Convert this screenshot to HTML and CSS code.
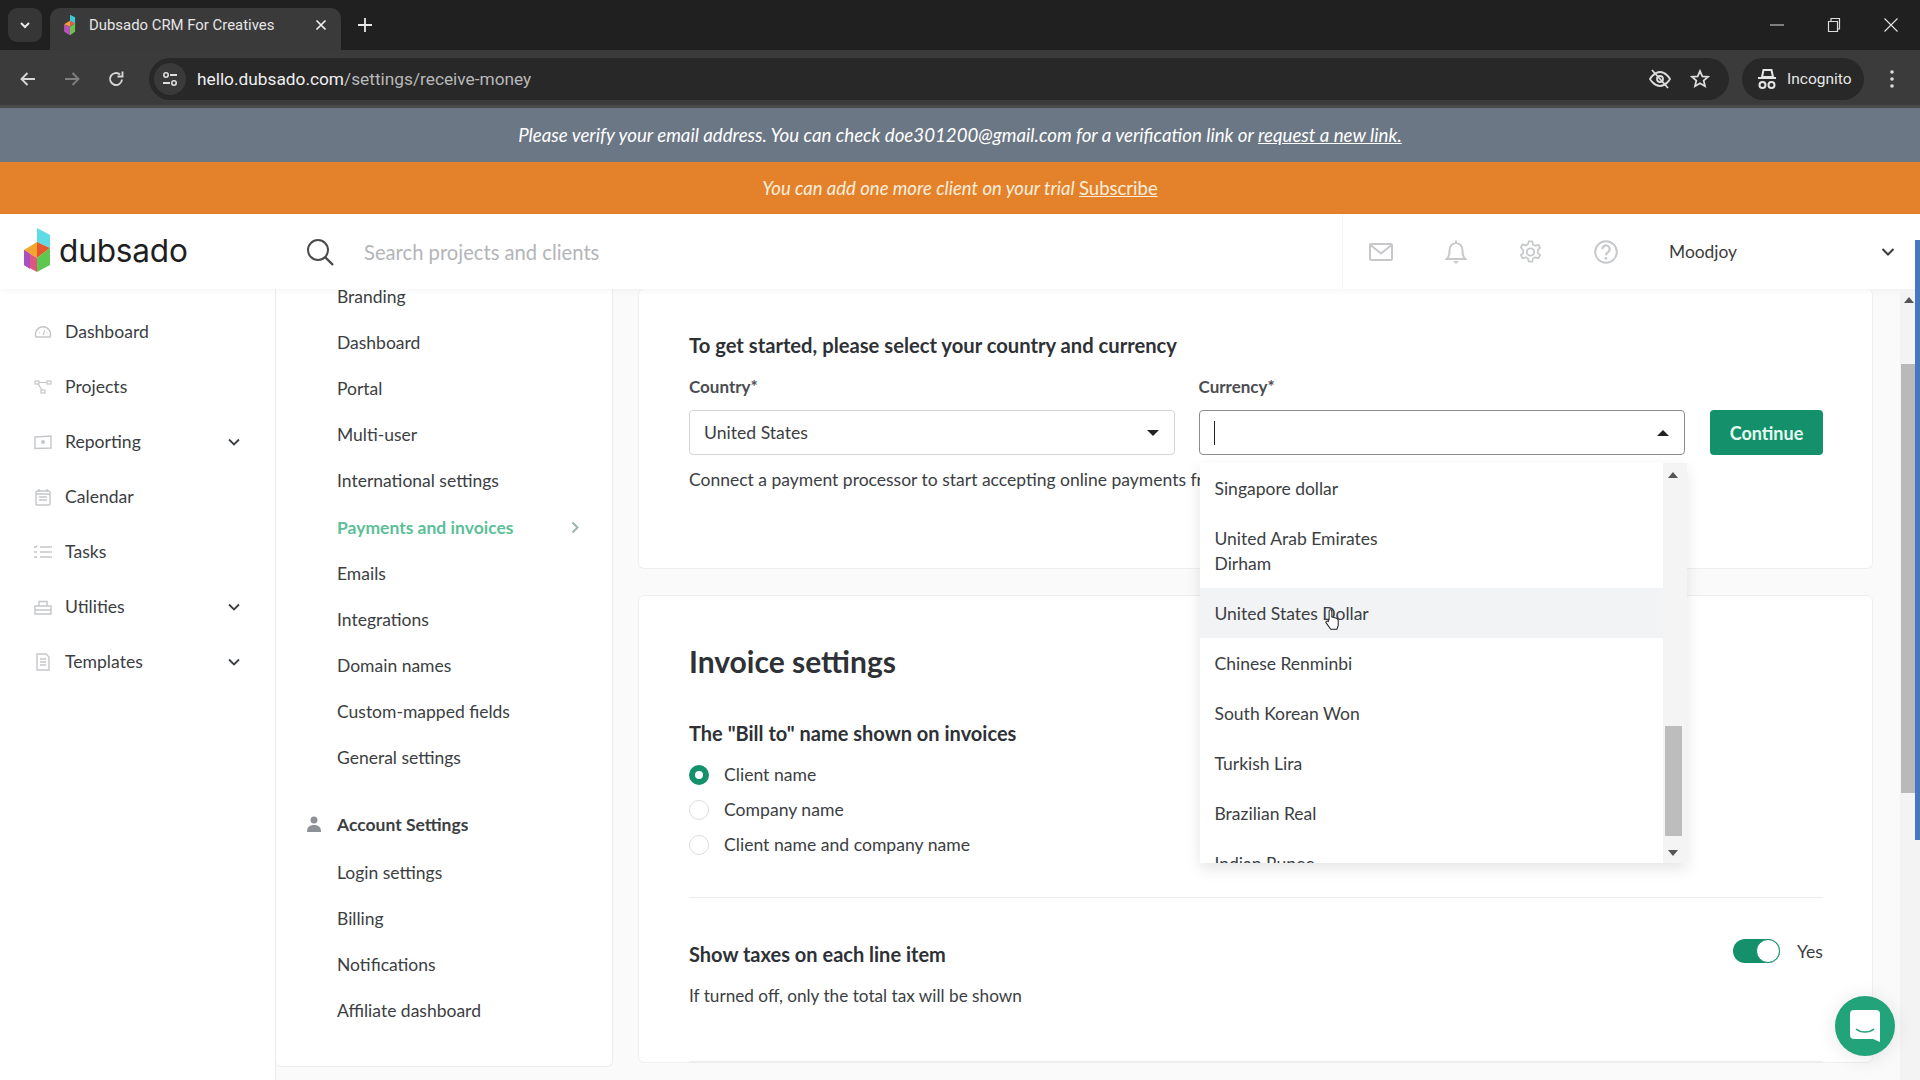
FILE: index.html
```html
<!DOCTYPE html>
<html lang="en">
<head>
<meta charset="utf-8">
<title>Dubsado CRM For Creatives</title>
<link rel="stylesheet" href="styles.css">
</head>
<body>
<div class="tabstrip">
  <div class="tabsearch"><svg width="14" height="14" viewBox="0 0 14 14"><path d="M3 5l4 4 4-4" fill="none" stroke="#e8e8e8" stroke-width="2"/></svg></div>
  <div class="tab">
    <svg class="favicon" width="14" height="24" viewBox="0 0 14 24"><path d="M7 0l6 3v8l-6-2z" fill="#3fc6d6"/><path d="M0 11l7-4v7z" fill="#f0a030"/><path d="M7 7l6 3-6 4z" fill="#e2574c"/><path d="M0 11l7 3v10l-7-4z" fill="#b552b8"/><path d="M7 14l6-4v10l-6 4z" fill="#6cc24a"/></svg>
    <span class="tabtitle">Dubsado CRM For Creatives</span>
    <svg class="tabx" width="12" height="12" viewBox="0 0 12 12"><path d="M1.500 1.500l9 9M10.500 1.500l-9 9" stroke="#efefef" stroke-width="1.700"/></svg>
  </div>
  <svg class="newtab" width="14" height="14" viewBox="0 0 14 14"><path d="M7 0v14M0 7h14" stroke="#e8e8e8" stroke-width="1.800"/></svg>
  <div class="winctl">
    <svg width="14" height="14" viewBox="0 0 14 14"><path d="M0 7h14" stroke="#dcdcdc" stroke-width="1"/></svg>
    <svg width="14" height="16" viewBox="0 0 14 16"><path d="M1.500 4.500h9v10h-9zM4 4V1.500h8.500V12H11" fill="none" stroke="#dcdcdc" stroke-width="1.200"/></svg>
    <svg width="14" height="14" viewBox="0 0 14 14"><path d="M0.500 0.500l13 13M13.500 0.500l-13 13" stroke="#e4e4e4" stroke-width="1.100"/></svg>
  </div>
</div>
<div class="toolbar">
  <svg class="navicon first" width="18" height="18" viewBox="0 0 18 18"><path d="M16 9H3M8.500 3L2.500 9l6 6" fill="none" stroke="#d6d6d6" stroke-width="1.900"/></svg>
  <svg class="navicon" width="18" height="18" viewBox="0 0 18 18"><path d="M2 9h13M9.500 3l6 6-6 6" fill="none" stroke="#7f7f7f" stroke-width="1.900"/></svg>
  <svg class="navicon" width="18" height="18" viewBox="0 0 18 18"><path d="M15 9.500A6 6 0 1 1 13 4.500M15.500 1.500v5h-5" fill="none" stroke="#d6d6d6" stroke-width="1.900"/></svg>
  <div class="urlbar">
    <span class="sitechip"><svg width="16" height="16" viewBox="0 0 16 16"><circle cx="4" cy="4" r="2.200" fill="none" stroke="#dedede" stroke-width="1.600"/><path d="M8 4h7M1 12h7" stroke="#dedede" stroke-width="1.800"/><circle cx="12" cy="12" r="2.200" fill="none" stroke="#dedede" stroke-width="1.600"/></svg></span>
    <span class="url"><b>hello.dubsado.com</b>/settings/receive-money</span>
    <svg class="eye" width="24" height="22" viewBox="0 0 24 22"><path d="M2 11s4-7 10-7 10 7 10 7-4 7-10 7S2 11 2 11z" fill="none" stroke="#dcdcdc" stroke-width="1.800"/><circle cx="12" cy="11" r="3" fill="none" stroke="#dcdcdc" stroke-width="1.800"/><path d="M4 2l16 18" stroke="#dcdcdc" stroke-width="1.800"/></svg>
    <svg width="20" height="20" viewBox="0 0 20 20"><path d="M10 2l2.300 5.300 5.700.5-4.300 3.800 1.300 5.600-5-3-5 3 1.300-5.600L2 7.800l5.700-.5z" fill="none" stroke="#dcdcdc" stroke-width="1.800"/></svg>
  </div>
  <div class="incognito">
    <svg width="20" height="22" viewBox="0 0 20 22"><path d="M5 9l1.500-7h8L16 9zM1 10h18" fill="none" stroke="#e6e6e6" stroke-width="2"/><circle cx="5.500" cy="17" r="3" fill="none" stroke="#e6e6e6" stroke-width="2"/><circle cx="14.500" cy="17" r="3" fill="none" stroke="#e6e6e6" stroke-width="2"/></svg>
    <span>Incognito</span>
  </div>
  <svg class="kebab" width="4" height="18" viewBox="0 0 4 18"><circle cx="2" cy="2" r="1.800" fill="#dcdcdc"/><circle cx="2" cy="9" r="1.800" fill="#dcdcdc"/><circle cx="2" cy="16" r="1.800" fill="#dcdcdc"/></svg>
</div>
<div class="verify">Please verify your email address. You can check doe301200@gmail.com for a verification link or&nbsp;<a>request a new link.</a></div>
<div class="trial">You can add one more client on your trial&nbsp;<a>Subscribe</a></div>
<header class="topbar">
  <div class="brand">
    <svg class="logomark" width="26" height="44" viewBox="0 0 26 44"><path d="M13 0l13 7v13l-13-6z" fill="#5fdbe6"/><path d="M0 22l13-8v16z" fill="#f3a52e"/><path d="M13 14l13 6-13 10z" fill="#e5572f"/><path d="M0 22l13 8v14L0 37z" fill="#e0567f"/><path d="M0 22l6 4v15l-6-4z" fill="#a84fc4"/><path d="M13 30l13-10v17l-13 7z" fill="#5ec84e"/></svg>
    <span class="wordmark">dubsado</span>
  </div>
  <div class="search">
    <svg width="30" height="30" viewBox="0 0 30 30"><circle cx="13" cy="13" r="10" fill="none" stroke="#4a4a4a" stroke-width="2"/><path d="M20 20l8 8" stroke="#4a4a4a" stroke-width="2.400"/></svg>
    <span>Search projects and clients</span>
  </div>
  <div class="topicons">
    <svg width="24" height="18" viewBox="0 0 24 18"><rect x="1" y="1" width="22" height="16" rx="1" fill="none" stroke="#c6c8ca" stroke-width="2"/><path d="M1.500 2L12 10.500 22.500 2" fill="none" stroke="#c6c8ca" stroke-width="2"/></svg>
    <svg width="22" height="24" viewBox="0 0 22 24"><path d="M11 0.500v2.500M1.500 19c2.500-1.500 3-4 3-8.500a6.500 7.500 0 0 1 13 0c0 4.500.5 7 3 8.500z" fill="none" stroke="#c6c8ca" stroke-width="2"/><path d="M8 21h6l-3 3z" fill="#c6c8ca"/></svg>
    <svg width="23" height="24" viewBox="0 0 24 26"><path d="M10 1.500h4l.7 3.500 2.500 1.300 3.300-1.200 2 3.500-2.600 2.300v3.200l2.600 2.300-2 3.500-3.300-1.200-2.500 1.300-.7 3.500h-4l-.7-3.500-2.500-1.300-3.300 1.200-2-3.500 2.600-2.300v-3.200L1.500 8.100l2-3.500 3.300 1.200 2.500-1.300z" fill="none" stroke="#c6c8ca" stroke-width="1.900" stroke-linejoin="round"/><circle cx="12" cy="13" r="4" fill="none" stroke="#c6c8ca" stroke-width="2"/></svg>
    <svg width="24" height="24" viewBox="0 0 26 26"><circle cx="13" cy="13" r="11.700" fill="none" stroke="#c6c8ca" stroke-width="2.200"/><path d="M9 10a4 4 0 1 1 6.300 3.200c-1.500 1-2.300 1.600-2.300 3.300" fill="none" stroke="#c6c8ca" stroke-width="2.400"/><circle cx="13" cy="20" r="1.500" fill="#c6c8ca"/></svg>
  </div>
  <div class="account"><span>Moodjoy</span><svg width="14" height="10" viewBox="0 0 14 10"><path d="M1.500 2l5.500 5.500L12.500 2" fill="none" stroke="#3c3c3c" stroke-width="2"/></svg></div>
</header>
<main class="workspace">
  <nav class="sidebar">
    <a class="navitem"><svg viewBox="0 0 18 18"><path d="M2 14a7.500 7.500 0 1 1 14 0z" fill="none" stroke="#c4c6c9" stroke-width="1.500"/><path d="M9 12l2-5M5 10h1M12.500 10h1" stroke="#c4c6c9" stroke-width="1.200"/></svg><span>Dashboard</span></a>
    <a class="navitem"><svg viewBox="0 0 18 18"><rect x="1" y="3" width="4" height="3" fill="none" stroke="#c4c6c9" stroke-width="1.200"/><rect x="13" y="3" width="4" height="3" fill="none" stroke="#c4c6c9" stroke-width="1.200"/><rect x="7" y="12" width="4" height="3" fill="none" stroke="#c4c6c9" stroke-width="1.200"/><path d="M5 4.500h8M4 6l4 6" stroke="#c4c6c9" stroke-width="1.200"/></svg><span>Projects</span></a>
    <a class="navitem"><svg viewBox="0 0 18 18"><path d="M1 4l16-1v12l-16 .5z" fill="none" stroke="#c4c6c9" stroke-width="1.400"/><circle cx="9" cy="9" r="2" fill="#c4c6c9"/></svg><span>Reporting</span><svg class="chev" viewBox="0 0 12 8"><path d="M1 1.500l5 5 5-5" fill="none" stroke="#3d4043" stroke-width="1.800"/></svg></a>
    <a class="navitem"><svg viewBox="0 0 18 18"><rect x="2" y="3" width="14" height="14" rx="1" fill="none" stroke="#c4c6c9" stroke-width="1.400"/><path d="M5 1v3M13 1v3M2 6h14M5 9h8M5 12h8" stroke="#c4c6c9" stroke-width="1.400"/></svg><span>Calendar</span></a>
    <a class="navitem"><svg viewBox="0 0 18 18"><path d="M6 4h12M6 9h12M6 14h12M0 3.500l1 1 2-2M0 9h3M0 14h3" fill="none" stroke="#c4c6c9" stroke-width="1.400"/></svg><span>Tasks</span></a>
    <a class="navitem"><svg viewBox="0 0 18 18"><path d="M1 8h16v8H1zM5 8V3.500h8V8M1 12h16" fill="none" stroke="#c4c6c9" stroke-width="1.400"/></svg><span>Utilities</span><svg class="chev" viewBox="0 0 12 8"><path d="M1 1.500l5 5 5-5" fill="none" stroke="#3d4043" stroke-width="1.800"/></svg></a>
    <a class="navitem"><svg viewBox="0 0 18 18"><path d="M3 1h9l3 3v13H3zM6 6h6M6 9h6M6 12h6" fill="none" stroke="#c4c6c9" stroke-width="1.400"/></svg><span>Templates</span><svg class="chev" viewBox="0 0 12 8"><path d="M1 1.500l5 5 5-5" fill="none" stroke="#3d4043" stroke-width="1.800"/></svg></a>
  </nav>
  <aside class="subnav">
    <a class="subitem">Branding</a>
    <a class="subitem">Dashboard</a>
    <a class="subitem">Portal</a>
    <a class="subitem">Multi-user</a>
    <a class="subitem">International settings</a>
    <a class="subitem active">Payments and invoices<svg width="9" height="13" viewBox="0 0 9 13"><path d="M1.500 1.500l5 5-5 5" fill="none" stroke="#9db3ab" stroke-width="2"/></svg></a>
    <a class="subitem">Emails</a>
    <a class="subitem">Integrations</a>
    <a class="subitem">Domain names</a>
    <a class="subitem">Custom-mapped fields</a>
    <a class="subitem">General settings</a>
    <div class="subhead"><svg width="14" height="16" viewBox="0 0 14 16"><circle cx="7" cy="4" r="3.500" fill="#8e9195"/><path d="M0 16c0-5 2.500-7 7-7s7 2 7 7z" fill="#8e9195"/></svg>Account Settings</div>
    <a class="subitem">Login settings</a>
    <a class="subitem">Billing</a>
    <a class="subitem">Notifications</a>
    <a class="subitem">Affiliate dashboard</a>
  </aside>
  <section class="content">
    <div class="card firstcard">
      <h3 class="starttitle">To get started, please select your country and currency</h3>
      <div class="selectrow">
        <div class="field">
          <label>Country*</label>
          <div class="select"><span>United States</span><i class="caret down"></i></div>
        </div>
        <div class="field currency">
          <label>Currency*</label>
          <div class="select open"><span class="cursor"></span><i class="caret up"></i></div>
          <div class="menu">
            <ul class="options">
              <li>Singapore dollar</li>
              <li>United Arab Emirates Dirham</li>
              <li class="hover">United States Dollar</li>
              <li>Chinese Renminbi</li>
              <li>South Korean Won</li>
              <li>Turkish Lira</li>
              <li>Brazilian Real</li>
              <li>Indian Rupee</li>
            </ul>
            <div class="menuscroll"><i class="caret up small"></i><b></b><i class="caret down small"></i></div>
          </div>
        </div>
        <button class="continue">Continue</button>
      </div>
      <p class="connect">Connect a payment processor to start accepting online payments from your clients.</p>
    </div>
    <div class="card">
      <h2>Invoice settings</h2>
      <h3 class="billto">The "Bill to" name shown on invoices</h3>
      <div class="radios">
        <div class="radio on"><i></i>Client name</div>
        <div class="radio"><i></i>Company name</div>
        <div class="radio"><i></i>Client name and company name</div>
      </div>
      <div class="taxes">
        <div class="taxrow"><h3>Show taxes on each line item</h3><div class="toggle"><i><b></b></i><span>Yes</span></div></div>
        <p>If turned off, only the total tax will be shown</p>
      </div>
    </div>
  </section>
</main>
<div class="pagescroll"><i class="caret up small"></i><b></b><em></em></div>
<svg class="pointer" width="17" height="25" viewBox="0 0 20 26"><path d="M6 13V3a1.600 1.600 0 0 1 3.200 0v7l5.500 1.500c1.500.5 2 1.500 2 3V20l-1.500 4.500H8L2.500 17c-1-1.500 1-3 2.500-1.500z" fill="#fff" stroke="#222" stroke-width="1.200"/></svg>
<div class="chat"><svg width="30" height="32" viewBox="0 0 30 32"><path d="M4 0h22a4 4 0 0 1 4 4v28l-7-3H4a4 4 0 0 1-4-4V4a4 4 0 0 1 4-4z" fill="#fff"/><path d="M6 19c5 4 13 4 18 0" fill="none" stroke="#23a37a" stroke-width="1.600"/></svg></div>
</body>
</html>
```
FILE: styles.css
```css
* { box-sizing: border-box; }
html, body { margin: 0; height: 100%; }
body { width: 1920px; height: 1080px; overflow: hidden; display: flex; flex-direction: column; font-family: "Lato", "Liberation Sans", sans-serif; color: #3b3e42; background: #fafafa; position: relative; }
h2, h3, p, ul { margin: 0; padding: 0; }

.tabstrip { height: 50px; background: #202020; display: flex; align-items: flex-end; padding-left: 8px; flex: none; }
.tabsearch { width: 34px; height: 34px; margin-bottom: 8px; background: #363636; border-radius: 9px; display: flex; align-items: center; justify-content: center; }
.tab { width: 291px; height: 42px; margin-left: 8px; background: #3a3a3a; border-radius: 10px 10px 0 0; display: flex; align-items: center; padding: 0 14px 8px 13px; color: #e6e6e6; font: 14.900px "Roboto", sans-serif; }
.favicon { flex: none; transform: scale(.85); }
.tabtitle { margin-left: 12px; flex: 1; }
.newtab { margin: 0 0 18px 17px; }
.winctl { margin-left: auto; height: 50px; display: flex; align-items: center; gap: 43px; padding: 0 22px 0 0; }

.toolbar { height: 58px; background: #3b3b3b; border-bottom: 3px solid #4a4a4a; padding-top: 3px; display: flex; align-items: center; flex: none; }
.navicon { margin-left: 26px; }
.navicon.first { margin-left: 19px; }
.urlbar { margin-left: 24px; width: 1580px; height: 42px; border-radius: 21px; background: #282828; display: flex; align-items: center; padding-right: 19px; gap: 18px; }
.sitechip { width: 32px; height: 32px; margin-left: 5px; border-radius: 50%; background: #3a3a3a; display: flex; align-items: center; justify-content: center; flex: none; }
.url { flex: 1; margin-left: -7px; font: 17.300px "Roboto", sans-serif; color: #b8b8b8; }
.url b { font-weight: 400; color: #efefef; }
.incognito { margin-left: 13px; width: 122px; height: 42px; border-radius: 21px; background: #282828; display: flex; align-items: center; gap: 10px; padding-left: 15px; color: #e6e6e6; font: 15.500px "Roboto", sans-serif; }
.kebab { margin-left: 26px; }

.verify, .trial { flex: none; display: flex; align-items: center; justify-content: center; color: #fff; font-style: italic; font-size: 18.700px; }
.verify { height: 54px; background: #6b7785; }
.verify a, .trial a { text-decoration: underline; font-style: normal; }
.verify a { font-style: italic; }
.trial { height: 52px; background: #e4822b; font-size: 18.500px; color: #fbeedd; }

.topbar { height: 75px; flex: none; background: #fff; display: flex; align-items: center; position: relative; z-index: 2; box-shadow: 0 2px 6px rgba(0,0,0,.04); }
.brand { width: 276px; display: flex; align-items: center; padding-left: 24px; gap: 9px; }
.logomark { margin-top: -3px; }
.wordmark { font: 400 31.600px "Inter", sans-serif; letter-spacing: -.2px; color: #1f1f1f; margin-top: -2px; }
.search { width: 1067px; padding-left: 29px; display: flex; align-items: center; gap: 29px; border-right: 1px solid #f6f6f6; height: 75px; font-size: 20.200px; color: #b3b5b8; }
.topicons { padding: 0 51px 0 26px; display: flex; align-items: center; gap: 52px; }
.account { flex: 1; display: flex; align-items: center; justify-content: space-between; padding-right: 25px; font-size: 17.400px; color: #3b3b3b; }

.workspace { flex: 1; display: flex; position: relative; min-height: 0; overflow: hidden; }
.sidebar { width: 276px; flex: none; background: #fff; border-right: 1px solid #ececec; padding-top: 15px; }
.navitem { height: 55px; display: flex; align-items: center; padding-left: 34px; font-size: 17.600px; }
.navitem > svg:first-child { width: 18px; height: 18px; margin-right: 13px; }
.navitem .chev { width: 12px; height: 8px; margin-left: auto; margin-right: 35px; }
.subnav { width: 337px; flex: none; background: #fff; border-right: 1px solid #ececec; border-bottom: 1px solid #ececec; border-radius: 0 0 6px 6px; padding: 0 0 0 61px; height: 778px; font-size: 17.500px; }
.subitem { height: 46.200px; display: flex; align-items: center; }
.subitem:first-child { margin-top: -16px; }
.subitem.active { color: #5cbf98; font-weight: 700; margin-right: 32px; justify-content: space-between; }
.subhead { display: flex; align-items: center; height: 44px; margin: 21px 0 3px -30px; color: #3b3e42; font-weight: 700; gap: 16px; }
.content { flex: 1; min-width: 0; padding: 0 0 0 25px; }
.card { width: 1235px; background: #fff; border: 1px solid #efefef; border-radius: 6px; padding: 0 49px 0 50px; }
.firstcard { height: 280px; border-top: 0; margin-bottom: 26px; }
.starttitle { font-size: 20.200px; font-weight: 700; color: #2e3135; padding-top: 44px; line-height: 24px; }
.selectrow { display: flex; gap: 25px; align-items: flex-end; margin-top: 19px; }
.field { width: 486px; position: relative; }
.field.currency { margin-left: -1px; width: 487px; }
.field label { display: block; font-size: 17px; font-weight: 700; color: #4a4d51; margin-bottom: 12px; line-height: 22px; }
.select { height: 45px; border: 1px solid #d3d5d8; border-radius: 4px; display: flex; align-items: center; justify-content: space-between; padding: 0 15px 0 14px; font-size: 17.600px; }
.select.open { border-color: #8a8d90; }
.cursor { width: 1px; height: 24px; background: #222; }
.caret { display: block; width: 0; height: 0; border-left: 6px solid transparent; border-right: 6px solid transparent; }
.caret.down { border-top: 6px solid #222; }
.caret.up { border-bottom: 6px solid #222; }
.caret.small { border-left-width: 5px; border-right-width: 5px; }
.caret.small.up { border-bottom: 6px solid #555; }
.caret.small.down { border-top: 6px solid #555; }
.continue { width: 113px; height: 45px; flex: none; border: 0; border-radius: 4px; background: #14906b; color: #e4fbf2; font: 700 18px "Lato", sans-serif; }
.connect { margin-top: 14px; font-size: 17.500px; white-space: nowrap; }
.menu { position: absolute; left: 1px; top: 87px; width: 487px; height: 400px; display: flex; background: #fff; box-shadow: 0 6px 14px rgba(0,0,0,.1); z-index: 1; overflow: hidden; }
.options { list-style: none; flex: 1; min-width: 0; font-size: 17.500px; line-height: 25px; }
.options li { padding: 12.500px 230px 12.500px 15px; }
.options li.hover { background: #f2f3f4; }
.menuscroll { width: 24px; flex: none; background: #f4f4f5; position: relative; }
.menuscroll b { position: absolute; left: 2px; top: 263px; width: 17px; height: 110px; background: #bdbdbd; }
.menuscroll .caret { position: absolute; left: 5px; }
.menuscroll .caret.up { top: 9px; }
.menuscroll .caret.down { bottom: 7px; }
.card h2 { font-size: 30px; font-weight: 700; color: #2e3135; padding-top: 45px; line-height: 40px; }
.billto { font-size: 20px; font-weight: 700; color: #2e3135; margin-top: 39px; line-height: 26px; }
.radios { margin-top: 11px; }
.radio { height: 35px; display: flex; align-items: center; font-size: 17.600px; }
.radio i { width: 20px; height: 20px; border-radius: 50%; border: 1px solid #dcdddf; margin-right: 15px; }
.radio.on i { border: 6px solid #14906b; }
.taxes { border-top: 1px solid #ececec; border-bottom: 1px solid #ececec; margin-top: 35px; height: 165px; padding-top: 44px; }
.taxrow { display: flex; justify-content: space-between; align-items: center; }
.taxrow h3 { font-size: 20px; font-weight: 700; color: #2e3135; }
.toggle { display: flex; align-items: center; gap: 17px; font-size: 17.600px; margin-top: -6px; }
.toggle i { display: block; width: 47px; height: 24px; border-radius: 12px; background: #14906b; position: relative; }
.toggle b { position: absolute; right: 0; top: 0; width: 24px; height: 24px; border-radius: 50%; background: #fff; border: 1px solid #14906b; }
.taxes p { font-size: 17.200px; margin-top: 19px; }
.pagescroll { position: absolute; right: 0; top: 289px; width: 20px; height: 791px; background: #f3f3f4; z-index: 3; }
.pagescroll b { position: absolute; left: 1px; top: 75px; width: 14px; height: 429px; background: #b9b9b9; }
.pagescroll em { position: absolute; right: 0; top: -49px; height: 600px; width: 5px; background: #4677c0; }
.pagescroll .caret { position: absolute; left: 4px; top: 8px; }
.pointer { position: absolute; left: 1324px; top: 607px; z-index: 5; }
.chat { position: absolute; left: 1835px; top: 996px; width: 60px; height: 60px; border-radius: 50%; background: #23a37a; display: flex; align-items: center; justify-content: center; box-shadow: 0 2px 20px rgba(0,0,0,.1); z-index: 4; }
```
